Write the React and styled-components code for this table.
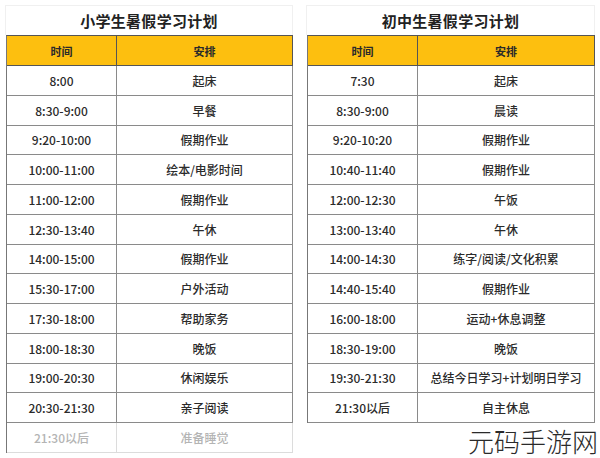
import React from "react";
import styled, { createGlobalStyle } from "styled-components";

const Global = createGlobalStyle`
  html, body { margin: 0; padding: 0; background: #fff; }
  body { font-family: "Noto Sans CJK SC", "Noto Sans", sans-serif; color: #333; }
  * { box-sizing: border-box; }
`;

const Page = styled.div`
  position: relative;
  width: 600px;
  height: 458px;
  display: flex;
  align-items: flex-start;
  gap: 14px;
  padding: 5px 0 0 6px;
`;

const Panel = styled.section`
  width: ${(p) => p.$w}px;
  display: flex;
  flex-direction: column;
`;

const Title = styled.h2`
  margin: 0 0 0 -1px;
  height: 30px;
  display: flex;
  align-items: center;
  justify-content: center;
  border: 1px solid #f0f0f0;
  border-bottom: none;
  font-size: 15px;
  font-weight: 700;
  color: #222;
  letter-spacing: 0.3px;
`;

const Grid = styled.div`
  display: grid;
  grid-template-columns: 110px 1fr;
  grid-template-rows: 30px;
  grid-auto-rows: 29.75px;
  border-left: 1px solid #777;
  border-top: 1px solid #555;
`;

const HeadCell = styled.div`
  background: #fdbf0f;
  display: flex;
  align-items: center;
  justify-content: center;
  font-size: 11px;
  font-weight: 700;
  color: #2a2a2a;
  border-right: 1px solid #555;
  border-bottom: 1px solid #555;
`;

const Cell = styled.div`
  display: flex;
  align-items: center;
  justify-content: center;
  font-size: 12px;
  font-weight: 500;
  color: ${(p) => (p.$faded ? "#b4b4b4" : "#2b2b2b")};
  border-right: 1px solid ${(p) => (p.$faded ? "#dcdcdc" : "#8a8a8a")};
  border-bottom: 1px solid ${(p) => (p.$faded ? "#dcdcdc" : "#8a8a8a")};
  white-space: nowrap;
`;

const Watermark = styled.div`
  position: absolute;
  right: 2px;
  bottom: 2px;
  font-size: 26px;
  font-weight: 300;
  color: #2a2a2a;
  line-height: 30px;
  white-space: nowrap;
`;

const primary = [
  ["8:00", "起床"],
  ["8:30-9:00", "早餐"],
  ["9:20-10:00", "假期作业"],
  ["10:00-11:00", "绘本/电影时间"],
  ["11:00-12:00", "假期作业"],
  ["12:30-13:40", "午休"],
  ["14:00-15:00", "假期作业"],
  ["15:30-17:00", "户外活动"],
  ["17:30-18:00", "帮助家务"],
  ["18:00-18:30", "晚饭"],
  ["19:00-20:30", "休闲娱乐"],
  ["20:30-21:30", "亲子阅读"],
  ["21:30以后", "准备睡觉", true],
];

const middle = [
  ["7:30", "起床"],
  ["8:30-9:00", "晨读"],
  ["9:20-10:20", "假期作业"],
  ["10:40-11:40", "假期作业"],
  ["12:00-12:30", "午饭"],
  ["13:00-13:40", "午休"],
  ["14:00-14:30", "练字/阅读/文化积累"],
  ["14:40-15:40", "假期作业"],
  ["16:00-18:00", "运动+休息调整"],
  ["18:30-19:00", "晚饭"],
  ["19:30-21:30", "总结今日学习+计划明日学习"],
  ["21:30以后", "自主休息"],
];

function Schedule({ title, rows, width }) {
  return (
    <Panel $w={width}>
      <Title>{title}</Title>
      <Grid>
        <HeadCell>时间</HeadCell>
        <HeadCell>安排</HeadCell>
        {rows.map(([t, a, faded], i) => (
          <React.Fragment key={i}>
            <Cell $faded={faded}>{t}</Cell>
            <Cell $faded={faded}>{a}</Cell>
          </React.Fragment>
        ))}
      </Grid>
    </Panel>
  );
}

export default function App() {
  return (
    <>
      <Global />
      <Page>
        <Schedule title="小学生暑假学习计划" rows={primary} width={287} />
        <Schedule title="初中生暑假学习计划" rows={middle} width={288} />
        <Watermark>元码手游网</Watermark>
      </Page>
    </>
  );
}
